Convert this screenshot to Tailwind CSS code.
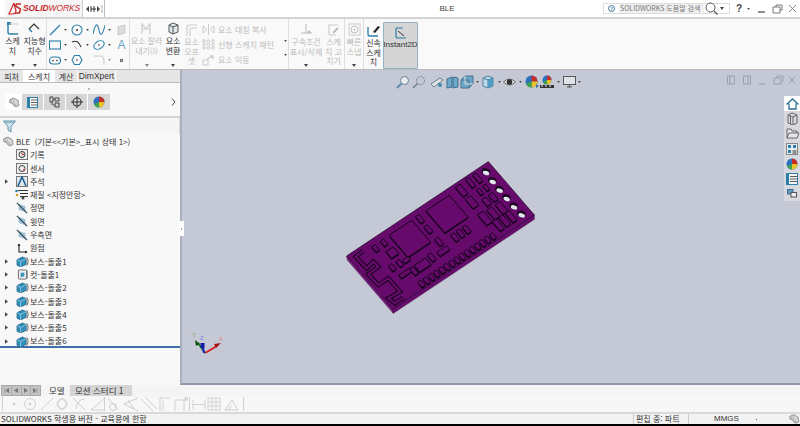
<!DOCTYPE html>
<html lang="ko">
<head>
<meta charset="utf-8">
<script src="https://cdn.jsdelivr.net/npm/@tailwindcss/browser@4"></script>
</head>
<body class="m-0 bg-black">
<svg width="0" height="0" class="absolute">
  <defs>
    <symbol id="caret" viewBox="0 0 4 3"><path d="M0 0h4L2 3z" fill="#444"/></symbol>
    <symbol id="caretl" viewBox="0 0 4 3"><path d="M0 0h4L2 3z" fill="#888"/></symbol>
    <symbol id="tri" viewBox="0 0 4 6"><path d="M0 0l4 3-4 3z" fill="#444"/></symbol>
    <symbol id="boss" viewBox="0 0 14 12">
      <path d="M1 4l6-3 4 2v6l-6 3-4-2z" fill="#2f8fb8" stroke="#1d5f80" stroke-width=".8"/>
      <path d="M1 4l4 2 6-3M5 6v6" fill="none" stroke="#b8e0f0" stroke-width=".7"/>
      <path d="M11.5 1.5c2 2 2 7 0 9" fill="none" stroke="#555" stroke-width="1"/>
    </symbol>
    <symbol id="cut" viewBox="0 0 14 12">
      <rect x="2.5" y="1" width="9" height="10" rx="1" fill="#e8eef2" stroke="#666" stroke-width="1"/>
      <path d="M5 4h4v4l-4 1z" fill="#3b93bb"/>
      <path d="M12 1.5v9" stroke="#666" stroke-width="1"/>
    </symbol>
    <symbol id="plane" viewBox="0 0 14 12">
      <path d="M3 1l8 3v7L3 8z" fill="#9cc0d4"/>
      <path d="M1 0l12 12" stroke="#2b3d4a" stroke-width="1.2"/>
    </symbol>
    <symbol id="part" viewBox="0 0 14 12">
      <path d="M2 3l4-2 3 1 3 2v3l1 2-3 2-3-1-2-3-3-1z" fill="#d8d8d8" stroke="#777" stroke-width=".9"/>
      <circle cx="5" cy="4.5" r="1.3" fill="#fff" stroke="#777" stroke-width=".6"/>
      <path d="M6 6l4 4" stroke="#777" stroke-width=".7"/>
    </symbol>
    <g id="comps">
      <rect x="27" y="3.6" width="16" height="16.5"/>
      <rect x="53" y="3.6" width="16.5" height="16.5"/>
      <rect x="14.7" y="3.5" width="2.5" height="4"/>
      <rect x="20.7" y="3.6" width="2.5" height="4"/>
      <rect x="19.3" y="10.4" width="5" height="5"/>
      <rect x="14.8" y="18" width="2.5" height="4"/>
      <rect x="19.7" y="18.4" width="2.5" height="4"/>
      <rect x="23.4" y="19.6" width="4" height="2.5"/>
      <rect x="16" y="25.6" width="7" height="2.5"/>
      <rect x="23.2" y="26" width="2.5" height="5"/>
      <rect x="26.6" y="25.9" width="8" height="5"/>
      <rect x="36.4" y="25.1" width="2.5" height="5"/>
      <rect x="41.8" y="26.8" width="7" height="3"/>
      <rect x="45.7" y="20" width="2.5" height="5"/>
      <rect x="46" y="3.1" width="2.5" height="5"/>
      <rect x="45.7" y="10.7" width="2.5" height="5"/>
      <rect x="54.6" y="23" width="2.5" height="5"/>
      <rect x="58.7" y="23" width="2.5" height="5"/>
      <rect x="62.8" y="23" width="2.5" height="5"/>
      <rect x="75.2" y="1.7" width="3.5" height="7"/>
      <rect x="82.7" y="1.4" width="2.5" height="6"/>
      <rect x="87.7" y="1.4" width="2.5" height="6"/>
      <rect x="75" y="10.6" width="4" height="7"/>
      <rect x="83.7" y="9.7" width="2" height="4"/>
      <rect x="88" y="9.7" width="2" height="4"/>
      <rect x="82.3" y="16" width="3" height="5"/>
      <rect x="87" y="16" width="3" height="5"/>
      <rect x="80.5" y="22.7" width="3.5" height="7"/>
      <rect x="86.3" y="22.7" width="3.5" height="7"/>
      <rect x="74.6" y="21.9" width="4" height="8"/>
      <rect x="78.5" y="29.9" width="3" height="7"/>
      <rect x="83" y="29.9" width="3" height="7"/>
      <rect x="87.5" y="29.9" width="3" height="7"/>
      <rect x="21.6" y="35" rx=".8" width="2.4" height="4"/>
      <rect x="25.2" y="35" rx=".8" width="2.4" height="4"/>
      <rect x="28.8" y="35" rx=".8" width="2.4" height="4"/>
      <rect x="32.4" y="35" rx=".8" width="2.4" height="4"/>
      <rect x="36" y="35" rx=".8" width="2.4" height="4"/>
      <rect x="39.6" y="35" rx=".8" width="2.4" height="4"/>
      <rect x="43.2" y="35" rx=".8" width="2.4" height="4"/>
      <rect x="46.8" y="35" rx=".8" width="2.4" height="4"/>
      <rect x="50.4" y="35" rx=".8" width="2.4" height="4"/>
      <rect x="54" y="35" rx=".8" width="2.4" height="4"/>
      <rect x="57.6" y="35" rx=".8" width="2.4" height="4"/>
      <rect x="61.2" y="35" rx=".8" width="2.4" height="4"/>
      <rect x="64.8" y="35" rx=".8" width="2.4" height="4"/>
      <rect x="68.4" y="35" rx=".8" width="2.4" height="4"/>
      <rect x="72" y="35" rx=".8" width="2.4" height="4"/>
    </g>
  </defs>
</svg>

<div class="w-[800px] h-[426px] overflow-hidden flex flex-col bg-black text-[#333] font-['Noto_Sans_CJK_KR','Noto_Sans',sans-serif]">

  <!-- title bar -->
  <header class="h-[19px] shrink-0 bg-white border-b-2 border-[#d4d4d4] flex items-stretch relative">
    <div class="ml-[5px] w-[78px] bg-[#f6f6f6] border-r border-[#ccc] flex items-center pl-[3px] gap-[1px]">
      <svg width="14" height="13" viewBox="0 0 14 13"><path d="M6 1L1 12h3.500q3 0 3.500-3L6 1" fill="none" stroke="#c8282c" stroke-width="1.200"/><path d="M13 2H8.500L7.500 4l5 3-1 4H7" fill="none" stroke="#c8282c" stroke-width="1.500"/></svg>
      <span class="text-[8.5px] font-bold italic text-[#c8282c] font-['Liberation_Sans',sans-serif] leading-none tracking-[-0.1px]">SOLID<span class="font-normal">WORKS</span></span>
    </div>
    <div class="w-[22px] border-r border-[#bbb] flex items-center pl-[3px] gap-[1px] text-[7px] text-[#333] leading-none">
      <svg width="14" height="8" viewBox="0 0 14 8"><path d="M3 1v6L0 4z" fill="#444"/><path d="M5 4h5M5 1v6M8 1v6" stroke="#333" fill="none"/><path d="M11 1v6l3-3z" fill="#444"/></svg>
      <span>¦</span>
    </div>
    <div class="flex-1 flex items-center justify-center text-[8px] text-[#444] pl-[186px] font-['Liberation_Sans',sans-serif]">BLE</div>
    <div class="w-[127px] my-[3px] bg-[#f0f0f0] border border-[#ddd] flex items-center">
      <div class="w-[15px] h-full bg-white flex items-center justify-center">
        <span class="w-[7px] h-[7px] rounded-full border border-[#3a7ca0] text-[5px] leading-[5px] text-center text-[#3a7ca0] font-bold">?</span>
      </div>
      <span class="text-[7px] text-[#777] pl-[1px] whitespace-nowrap flex-1">SOLIDWORKS 도움말 검색</span>
      <div class="w-[25px] h-full bg-white flex items-center gap-[2px] pl-[1px]">
        <svg width="13" height="13" viewBox="0 0 13 13"><circle cx="5.5" cy="5.5" r="4.5" fill="none" stroke="#555"/><path d="M9 9l3.500 3.500" stroke="#555" stroke-width="1.200"/></svg>
        <svg class="w-[4px] h-[3px]"><use href="#caret"/></svg>
      </div>
    </div>
    <div class="w-[70px] flex items-center pl-[6px] text-[#444]">
      <span class="text-[10px] font-bold leading-none font-['Liberation_Sans',sans-serif] w-[11px]">?</span>
      <svg class="w-[3px] h-[2px] mr-[8px]"><use href="#caret"/></svg>
      <svg width="40" height="10" viewBox="0 0 40 10"><path d="M0 8h7" stroke="#444" stroke-width="1.200"/><path d="M15 3h7v6h-7zM18 3V1h6v5h-2" fill="none" stroke="#777"/><path d="M31 1l7 7M38 1l-7 7" stroke="#888"/></svg>
    </div>
  </header>

  <!-- ribbon -->
  <section class="h-[51px] shrink-0 bg-[#f9f9f9] border-b border-[#bbb] flex text-[8px] leading-[10px] text-center">
    <div class="w-[23px] ml-[1px] flex flex-col items-center pt-[3px] pb-[2px]">
      <svg width="13" height="13" viewBox="0 0 13 13"><path d="M2 1v9q0 2 2 2h8" fill="none" stroke="#2c7fa8" stroke-width="1.400"/><rect x="1" y="0" width="4" height="3" fill="#2c7fa8"/><path d="M3 2h9" stroke="#ccc"/></svg>
      <span class="mt-[1px]">스케<br>치</span>
      <svg class="w-[4px] h-[3px] mt-auto"><use href="#caret"/></svg>
    </div>
    <div class="w-[21px] flex flex-col items-center pt-[3px] pb-[2px] border-r border-[#ddd] pr-[1px] box-content">
      <svg width="13" height="13" viewBox="0 0 13 13"><path d="M1 7l5-5 5 5" fill="none" stroke="#333" stroke-width="1.200"/><path d="M1 7l3 3" stroke="#2c7fa8" stroke-width="1.400"/></svg>
      <span class="mt-[1px] whitespace-nowrap">지능형<br>치수</span>
      <svg class="w-[4px] h-[3px] mt-auto"><use href="#caret"/></svg>
    </div>

    <!-- sketch tools -->
    <div class="w-[83px] border-r border-[#ddd] grid grid-cols-[22px_22px_22px_15px] grid-rows-3 pl-[1px] pt-[3px] pb-[1px]">
      <div class="flex items-center pl-[1px] gap-[3px]"><svg width="12" height="12" viewBox="0 0 12 12"><path d="M1 11L11 1" stroke="#2c7fa8" stroke-width="1.200"/></svg><svg class="w-[3px] h-[2px]"><use href="#caret"/></svg></div>
      <div class="flex items-center pl-[1px] gap-[3px]"><svg width="12" height="12" viewBox="0 0 12 12"><circle cx="6" cy="6" r="5" fill="none" stroke="#2c7fa8" stroke-width="1.100"/><circle cx="6" cy="6" r="1" fill="#333"/></svg><svg class="w-[3px] h-[2px]"><use href="#caret"/></svg></div>
      <div class="flex items-center pl-[1px] gap-[3px]"><svg width="12" height="12" viewBox="0 0 12 12"><path d="M0 10C3 -4 5 1 6 6s3 8 6-5" fill="none" stroke="#2c7fa8" stroke-width="1.100"/></svg><svg class="w-[3px] h-[2px]"><use href="#caret"/></svg></div>
      <div class="flex items-center justify-center"><svg width="9" height="12" viewBox="0 0 9 12"><path d="M1 3l7-2v8l-7 2z" fill="#ddd" stroke="#aaa" stroke-dasharray="1 1"/></svg></div>
      <div class="flex items-center pl-[1px] gap-[3px]"><svg width="12" height="10" viewBox="0 0 12 10"><rect x=".5" y="1" width="11" height="8" fill="none" stroke="#2c7fa8" stroke-width="1.100"/></svg><svg class="w-[3px] h-[2px]"><use href="#caret"/></svg></div>
      <div class="flex items-center pl-[1px] gap-[3px]"><svg width="12" height="12" viewBox="0 0 12 12"><path d="M1 3q6-3 9 5" fill="none" stroke="#333" stroke-width="1.100"/><path d="M3 7l3 3" stroke="#aaa"/></svg><svg class="w-[3px] h-[2px]"><use href="#caret"/></svg></div>
      <div class="flex items-center pl-[1px] gap-[3px]"><svg width="12" height="12" viewBox="0 0 12 12"><ellipse cx="6" cy="6" rx="5.500" ry="3.700" transform="rotate(-30 6 6)" fill="none" stroke="#2c7fa8" stroke-width="1.100"/><circle cx="6" cy="6" r=".8" fill="#333"/></svg><svg class="w-[3px] h-[2px]"><use href="#caret"/></svg></div>
      <div class="flex items-center justify-center text-[12px] font-['Liberation_Sans',sans-serif] text-[#6aa6c4] leading-none">A</div>
      <div class="flex items-center pl-[1px] gap-[3px]"><svg width="12" height="9" viewBox="0 0 12 9"><rect x=".5" y="1" width="11" height="7" rx="3.500" fill="none" stroke="#2c7fa8" stroke-width="1.100"/><circle cx="4" cy="4.500" r=".8" fill="#333"/><circle cx="8" cy="4.500" r=".8" fill="#333"/></svg><svg class="w-[3px] h-[2px]"><use href="#caret"/></svg></div>
      <div class="flex items-center pl-[1px]"><svg width="12" height="12" viewBox="0 0 12 12"><path d="M3.500 1.500h5L11 6 8.500 10.500h-5L1 6z" fill="none" stroke="#2c7fa8" stroke-width="1.100"/><circle cx="6" cy="6" r=".8" fill="#333"/></svg></div>
      <div class="flex items-center pl-[1px] gap-[3px]"><svg width="12" height="12" viewBox="0 0 12 12"><path d="M1 2h6q4 0 4 5v4" fill="none" stroke="#ccc" stroke-width="1.100"/></svg><svg class="w-[3px] h-[2px]"><use href="#caretl"/></svg></div>
      <div class="flex items-center justify-center"><span class="w-[3px] h-[3px] border border-[#666]"></span></div>
    </div>

    <!-- disabled entity tools -->
    <div class="w-[33px] flex flex-col items-center pt-[3px] pb-[2px] text-[#bbb]">
      <svg width="13" height="13" viewBox="0 0 13 13"><path d="M2 12V2l4 5 4-5v10M2 7h8" fill="none" stroke="#ccc" stroke-width="1.200"/></svg>
      <span class="mt-[1px] whitespace-nowrap">요소 잘라<br>내기(I)</span>
      <svg class="w-[4px] h-[3px] mt-auto"><use href="#caretl"/></svg>
    </div>
    <div class="w-[20px] flex flex-col items-center pt-[3px] pb-[2px]">
      <svg width="13" height="13" viewBox="0 0 13 13"><path d="M2 3l4-2 5 2v7l-5 2-4-2z" fill="#dfe8ee" stroke="#555"/><path d="M2 3l4 2 5-2M6 5v7" fill="none" stroke="#555"/></svg>
      <span class="mt-[1px]">요소<br>변환</span>
      <svg class="w-[4px] h-[3px] mt-auto"><use href="#caret"/></svg>
    </div>
    <div class="w-[17px] flex flex-col items-center pt-[5px] text-[#bbb] leading-[9.5px]">
      <svg width="12" height="12" viewBox="0 0 12 12"><path d="M1 12V3q0-2 2-2h8M4 12V6q0-2 2-2h5" fill="none" stroke="#ccc" stroke-width="1.100"/></svg>
      <span class="mt-[1px]">요소<br>오프<br>셋</span>
    </div>
    <div class="w-[83px] grid grid-rows-3 pt-[3px] pb-[1px] pl-[2px] text-[#bbb] text-left whitespace-nowrap">
      <div class="flex items-center gap-[3px]"><svg width="13" height="11" viewBox="0 0 13 11"><path d="M6.500 0v11M1 2l4 3.500-4 3.500zM12 2L8 5.500l4 3.500z" fill="none" stroke="#ccc"/></svg>요소 대칭 복사</div>
      <div class="flex items-center gap-[3px]"><svg width="13" height="11" viewBox="0 0 13 11"><g fill="none" stroke="#ccc"><circle cx="2" cy="2" r="1.300"/><circle cx="6.500" cy="2" r="1.300"/><circle cx="11" cy="2" r="1.300"/><circle cx="2" cy="5.500" r="1.300"/><circle cx="6.500" cy="5.500" r="1.300"/><circle cx="11" cy="5.500" r="1.300"/><circle cx="2" cy="9" r="1.300"/><circle cx="6.500" cy="9" r="1.300"/><circle cx="11" cy="9" r="1.300"/></g></svg>선형 스케치 패턴</div>
      <div class="flex items-center gap-[3px]"><svg width="13" height="11" viewBox="0 0 13 11"><rect x="1" y="5" width="5" height="5" fill="none" stroke="#ccc"/><path d="M5 4l6-3M8 1h3v3" fill="none" stroke="#bbb"/></svg>요소 이동</div>
    </div>
    <div class="w-[6px] flex flex-col items-center justify-center gap-[12px] border-r border-[#ddd] pt-[8px]">
      <svg class="w-[3px] h-[2px]"><use href="#caret"/></svg>
      <svg class="w-[3px] h-[2px]"><use href="#caret"/></svg>
    </div>
    <div class="w-[34px] flex flex-col items-center pt-[4px] pb-[2px] text-[#bbb]">
      <svg width="13" height="13" viewBox="0 0 13 13"><path d="M6 1v9M1 10h11" fill="none" stroke="#bbb"/><circle cx="9" cy="9" r="1.500" fill="#bbb"/></svg>
      <span class="mt-[1px] whitespace-nowrap">구속조건<br>표시/삭제</span>
      <svg class="w-[4px] h-[3px] mt-auto"><use href="#caret"/></svg>
    </div>
    <div class="w-[21px] flex flex-col items-center pt-[5px] text-[#bbb] border-r border-[#ddd] box-content leading-[9.5px]">
      <svg width="13" height="12" viewBox="0 0 13 12"><path d="M11 1H2v8q0 2 2 2h5" fill="none" stroke="#ccc" stroke-width="1.200"/><path d="M6 9l5-5" stroke="#bbb" stroke-width="1.800"/></svg>
      <span class="mt-[1px] whitespace-nowrap">스케<br>치 고<br>치기</span>
    </div>
    <div class="w-[18px] flex flex-col items-center pt-[4px] pb-[2px] text-[#bbb] border-r border-[#ddd] box-content">
      <svg width="13" height="13" viewBox="0 0 13 13"><rect x="1" y="1" width="11" height="11" fill="none" stroke="#ccc"/><circle cx="6.500" cy="6.500" r="3.500" fill="none" stroke="#bbb"/><circle cx="6.500" cy="6.500" r="1" fill="#bbb"/></svg>
      <span class="mt-[1px]">빠른<br>스냅</span>
      <svg class="w-[4px] h-[3px] mt-auto"><use href="#caret"/></svg>
    </div>
    <div class="w-[19px] flex flex-col items-center pt-[6px] leading-[9.5px]">
      <svg width="13" height="12" viewBox="0 0 13 12"><path d="M1 2v7q0 2 2 2h8" fill="none" stroke="#2c7fa8" stroke-width="1.300"/><path d="M6 7l5-6 2 1-5 6z" fill="#222"/></svg>
      <span class="mt-[1px]">신속<br>스케<br>치</span>
    </div>
    <div class="w-[35px] bg-[#d5d5d5] border border-[#8fb4c8] rounded-[1px] mt-[3px] flex flex-col items-center pt-[4px] text-[8px] font-['Liberation_Sans',sans-serif] whitespace-nowrap">
      <svg width="13" height="12" viewBox="0 0 13 12"><path d="M2 1h7M2 1v8q0 2 2 2h8" fill="none" stroke="#2c7fa8" stroke-width="1.200"/><path d="M4 4l6 5" stroke="#333"/></svg>
      <span class="mt-[1px]">Instant2D</span>
    </div>
  </section>

  <!-- main -->
  <main class="flex-1 min-h-0 flex">
    <!-- left panel -->
    <aside class="w-[180px] shrink-0 bg-[#f8f8f8] flex flex-col relative">
      <div class="h-[13px] shrink-0 bg-[#e6e6e6] border-b border-[#bbb] flex text-[8px] leading-[13px] text-[#333]">
        <span class="w-[24px] text-center border-r border-white">피처</span>
        <span class="w-[30px] text-center bg-white">스케치</span>
        <span class="w-[24px] text-center border-r border-l border-white">계산</span>
        <span class="w-[38px] text-center border-r border-white font-['Liberation_Sans',sans-serif] text-[8.5px]">DimXpert</span>
      </div>
      <div class="h-[11px] shrink-0 flex items-center justify-center pr-[2px]"><span class="w-[2px] h-[2px] rounded-full bg-[#aaa]"></span></div>
      <div class="h-[16px] shrink-0 flex items-stretch pl-[5px] pr-[4px]">
        <div class="w-[17px] flex items-center justify-center bg-white"><svg class="w-[12px] h-[11px]"><use href="#part"/></svg></div>
        <div class="w-[22px] flex items-center justify-center bg-[#d6d6d6] border-r border-white"><svg width="11" height="11" viewBox="0 0 11 11"><rect x=".5" y=".5" width="10" height="10" fill="#fff" stroke="#2c7fa8"/><path d="M1 1h2v9H1z" fill="#2c7fa8"/><path d="M4 3h6M4 5.500h6M4 8h6" stroke="#333" stroke-width=".8"/></svg></div>
        <div class="w-[22px] flex items-center justify-center bg-[#d6d6d6] border-r border-white"><svg width="11" height="12" viewBox="0 0 11 12"><path d="M1 1h3v5H1zM6 2h4v3H6zM6 7h4v4H6zM4 3h2M4 9h2M3 6v3" fill="none" stroke="#444"/></svg></div>
        <div class="w-[22px] flex items-center justify-center bg-[#d6d6d6] border-r border-white"><svg width="12" height="12" viewBox="0 0 12 12"><circle cx="6" cy="6" r="4" fill="none" stroke="#333" stroke-width="1.100"/><path d="M6 0v12M0 6h12" stroke="#333"/></svg></div>
        <div class="w-[22px] flex items-center justify-center bg-[#d6d6d6]"><svg width="12" height="12" viewBox="0 0 12 12"><circle cx="6" cy="6" r="5.500" fill="#2f6fc0"/><path d="M6 6V.5A5.500 5.500 0 0 1 11.500 6z" fill="#c42e26"/><path d="M6 6h5.500A5.500 5.500 0 0 1 6 11.500z" fill="#e8c228"/><path d="M6 6v5.500A5.500 5.500 0 0 1 1 8z" fill="#3fa34a"/></svg></div>
        <div class="flex-1 flex items-center justify-end"><svg width="5" height="8" viewBox="0 0 5 8"><path d="M1 .5L4 4 1 7.500" fill="none" stroke="#444"/></svg></div>
      </div>
      <div class="h-[8px] shrink-0 border-b-2 border-[#d4d4d4]"></div>
      <div class="h-[16px] shrink-0 bg-[#f5f5f5] border-r border-[#ddd] flex items-center pl-[3px]">
        <svg width="13" height="13" viewBox="0 0 13 13"><path d="M.5 1h12L8 6.500V12L5 10V6.500z" fill="#cfe3ee" stroke="#5b8fa8"/><path d="M2 2.500h9" stroke="#8ab0c2"/></svg>
      </div>
      <ul class="flex flex-col text-[8px] leading-[13.3px] h-[214px] border-b-2 border-[#3f6fa8] pt-[1px] whitespace-nowrap shrink-0">
        <li class="h-[13.3px] flex items-center pl-[2px] gap-[2px]"><svg class="w-[12px] h-[11px]"><use href="#part"/></svg>BLE&nbsp; (기본&lt;&lt;기본&gt;_표시 상태 1&gt;)</li>
        <li class="h-[13.3px] flex items-center pl-[16px] gap-[2px]"><svg width="12" height="11" viewBox="0 0 12 11"><rect x=".5" y=".5" width="11" height="10" fill="#eee" stroke="#777"/><circle cx="6" cy="5.500" r="3" fill="none" stroke="#333"/><path d="M6 3.500v2h2" stroke="#c33" fill="none"/></svg>기록</li>
        <li class="h-[13.3px] flex items-center pl-[16px] gap-[2px]"><svg width="12" height="11" viewBox="0 0 12 11"><rect x=".5" y=".5" width="11" height="10" fill="#eee" stroke="#777"/><circle cx="6" cy="5.500" r="3" fill="none" stroke="#444"/><circle cx="8" cy="7" r="1" fill="#c33"/></svg>센서</li>
        <li class="h-[13.3px] flex items-center pl-[5px] gap-[2px]"><svg class="w-[3px] h-[5px] mr-[6px]"><use href="#tri"/></svg><svg width="12" height="11" viewBox="0 0 12 11"><rect x=".5" y=".5" width="11" height="10" fill="#dfe8ee" stroke="#777"/><path d="M2 10L6 1l4 9" fill="none" stroke="#1f5f90" stroke-width="1.600"/></svg>주석</li>
        <li class="h-[13.3px] flex items-center pl-[15px] gap-[2px]"><svg width="13" height="11" viewBox="0 0 13 11"><path d="M3 1.500h10M5 4.500h8M5 7.500h8" stroke="#333"/><circle cx="1.500" cy="2" r="1.300" fill="#2c7fa8"/><circle cx="2" cy="6" r="1.300" fill="#d8a020"/><circle cx="8" cy="9" r="1.500" fill="#444"/></svg>재질 &lt;지정안함&gt;</li>
        <li class="h-[13.3px] flex items-center pl-[16px] gap-[2px]"><svg class="w-[12px] h-[12px]"><use href="#plane"/></svg>정면</li>
        <li class="h-[13.3px] flex items-center pl-[16px] gap-[2px]"><svg class="w-[12px] h-[12px]"><use href="#plane"/></svg>윗면</li>
        <li class="h-[13.3px] flex items-center pl-[16px] gap-[2px]"><svg class="w-[12px] h-[12px]"><use href="#plane"/></svg>우측면</li>
        <li class="h-[13.3px] flex items-center pl-[16px] gap-[2px]"><svg width="12" height="11" viewBox="0 0 12 11"><path d="M3 1v8h8" fill="none" stroke="#222" stroke-width="1.100"/><path d="M1.500 3L3 .5 4.500 3zM9 7.500L11.500 9 9 10.500z" fill="#222"/></svg>원점</li>
        <li class="h-[13.3px] flex items-center pl-[5px] gap-[2px]"><svg class="w-[3px] h-[5px] mr-[6px]"><use href="#tri"/></svg><svg class="w-[13px] h-[11px] mr-[-1px]"><use href="#boss"/></svg>보스-돌출1</li>
        <li class="h-[13.3px] flex items-center pl-[5px] gap-[2px]"><svg class="w-[3px] h-[5px] mr-[6px]"><use href="#tri"/></svg><svg class="w-[13px] h-[11px] mr-[-1px]"><use href="#cut"/></svg>컷-돌출1</li>
        <li class="h-[13.3px] flex items-center pl-[5px] gap-[2px]"><svg class="w-[3px] h-[5px] mr-[6px]"><use href="#tri"/></svg><svg class="w-[13px] h-[11px] mr-[-1px]"><use href="#boss"/></svg>보스-돌출2</li>
        <li class="h-[13.3px] flex items-center pl-[5px] gap-[2px]"><svg class="w-[3px] h-[5px] mr-[6px]"><use href="#tri"/></svg><svg class="w-[13px] h-[11px] mr-[-1px]"><use href="#boss"/></svg>보스-돌출3</li>
        <li class="h-[13.3px] flex items-center pl-[5px] gap-[2px]"><svg class="w-[3px] h-[5px] mr-[6px]"><use href="#tri"/></svg><svg class="w-[13px] h-[11px] mr-[-1px]"><use href="#boss"/></svg>보스-돌출4</li>
        <li class="h-[13.3px] flex items-center pl-[5px] gap-[2px]"><svg class="w-[3px] h-[5px] mr-[6px]"><use href="#tri"/></svg><svg class="w-[13px] h-[11px] mr-[-1px]"><use href="#boss"/></svg>보스-돌출5</li>
        <li class="h-[13.3px] flex items-center pl-[5px] gap-[2px]"><svg class="w-[3px] h-[5px] mr-[6px]"><use href="#tri"/></svg><svg class="w-[13px] h-[11px] mr-[-1px]"><use href="#boss"/></svg>보스-돌출6</li>
      </ul>
      <div class="absolute right-[-4px] top-[151px] w-[5px] h-[15px] bg-white flex items-center justify-center z-10"><span class="w-[1px] h-[2px] bg-[#999]"></span></div>
    </aside>

    <!-- viewport -->
    <div class="flex-1 relative bg-[#c5c9d5] border-l-2 border-[#aab0bd] border-b-2 border-b-[#8f96a5]">
      <div class="h-[23px] flex items-center pl-[214px]">
        <svg class="shrink-0" width="14" height="14" viewBox="0 0 14 14"><circle cx="8.500" cy="5.500" r="4" fill="#e8ebf0" stroke="#6a7f8f"/><path d="M5.500 8.500L1 13" stroke="#5f8db0" stroke-width="2"/></svg>
        <svg class="shrink-0 ml-[2px]" width="14" height="14" viewBox="0 0 14 14"><circle cx="8.500" cy="5.500" r="4" fill="none" stroke="#6a7f8f" stroke-dasharray="2 1"/><path d="M5.500 8.500L1 13" stroke="#6a7f8f" stroke-width="1.500"/></svg>
        <svg class="shrink-0 ml-[4px]" width="14" height="14" viewBox="0 0 14 14"><path d="M1 9l9-6 3 2-9 7z" fill="#dfe3e8" stroke="#6a7f8f"/><circle cx="10" cy="10" r="2" fill="#3b8ab0"/></svg>
        <svg class="shrink-0 ml-[1.5px]" width="13" height="14" viewBox="0 0 13 14"><path d="M1 4l5-2v10l-5 1zM7 2l5 1v9l-5 1z" fill="#6aa8cc" stroke="#3f6f8c"/></svg>
        <svg class="shrink-0 ml-[1.5px]" width="14" height="14" viewBox="0 0 14 14"><path d="M1 5h8v8H1zM1 5l4-4h8v8l-4 4" fill="#6aa8cc" stroke="#4f6f8c"/><path d="M5 1v8H13" stroke="#ddd" fill="none"/></svg>
        <svg class="shrink-0 w-[3px] h-[2px] ml-[1.5px]"><use href="#caret"/></svg>
        <svg class="shrink-0 ml-[3.5px]" width="12" height="14" viewBox="0 0 12 14"><path d="M1 3l5-2 5 2v8l-5 2-5-2z" fill="#bcdcec" stroke="#4f7f9c"/><path d="M6 4v9M1 3l5 2 5-2" fill="none" stroke="#4f7f9c"/><path d="M6 5l5-2v8l-5 2z" fill="#4f9cc4"/></svg>
        <svg class="shrink-0 w-[3px] h-[2px] ml-[3.5px]"><use href="#caret"/></svg>
        <svg class="shrink-0 ml-[2px]" width="13" height="12" viewBox="0 0 13 12"><path d="M.5 6Q6.500 0 12.500 6 6.500 12 .5 6z" fill="#eee" stroke="#666"/><circle cx="6.500" cy="6" r="2.800" fill="#333"/></svg>
        <svg class="shrink-0 w-[3px] h-[2px] ml-[3px]"><use href="#caret"/></svg>
        <svg class="shrink-0 ml-[3.5px]" width="14" height="14" viewBox="0 0 14 14"><circle cx="6.500" cy="6.500" r="6" fill="#2f6fc0"/><path d="M6.500 6.500V.5A6 6 0 0 1 12.500 6.500z" fill="#c42e26"/><path d="M6.500 6.500h6A6 6 0 0 1 6.500 12.500z" fill="#e8c228"/><path d="M6.500 6.500v6A6 6 0 0 1 1 9z" fill="#3fa34a"/><path d="M11 9l3 2-3 2z" fill="#3b6fa0"/></svg>
        <svg class="shrink-0 ml-[1px]" width="14" height="14" viewBox="0 0 14 14"><circle cx="7" cy="5" r="4.500" fill="#2f6fc0"/><path d="M7 5V.5A4.500 4.500 0 0 1 11.500 5z" fill="#c42e26"/><path d="M7 5h4.500A4.500 4.500 0 0 1 7 9.500z" fill="#e8c228"/><path d="M7 5v4.500A4.500 4.500 0 0 1 3 7z" fill="#3fa34a"/><path d="M0 10h14v3H0z" fill="#333"/><path d="M1 11h2M5 11h2M9 11h2" stroke="#eee"/></svg>
        <svg class="shrink-0 w-[3px] h-[2px] ml-[2.5px]"><use href="#caret"/></svg>
        <svg class="shrink-0 ml-[3px]" width="13" height="12" viewBox="0 0 13 12"><rect x=".5" y=".5" width="12" height="8" fill="#dfe3e8" stroke="#555"/><path d="M4 11h5M6.500 9v2" stroke="#555" stroke-width="1.200"/></svg>
        <svg class="shrink-0 w-[3px] h-[2px] ml-[2px]"><use href="#caret"/></svg>
      </div>
      <!-- window controls of the document -->
      <div class="absolute top-[5px] right-[5px] flex items-center">
        <svg width="68" height="11" viewBox="0 0 68 11"><g fill="none" stroke="#9aa0ac"><path d="M.5 1h7v8h-7zM3 1v8"/><path d="M16.500 1h7v8h-7zM21 1v8"/><path d="M32 9h6" stroke-width="1.200"/><path d="M47 3h7v6h-7zM50 3V1h6v5h-2"/><path d="M62 1.500l6 7M68 1.500l-6 7"/></g></svg>
      </div>

      <!-- the part -->
      <svg class="absolute left-[158px] top-[80px]" width="200" height="170" viewBox="0 0 600 510">
        <path d="M20 318L158 478 160 490 22 330z" fill="#7d1a85" stroke="#3a0a3e" stroke-width="1.500"/>
        <path d="M158 478L583 195 583 208 160 490z" fill="#690c70" stroke="#3a0a3e" stroke-width="1.500"/>
        <path d="M20 318L445 35 583 195 158 478z" fill="#660a6c" stroke="#2e0832" stroke-width="2.500"/>
        <path d="M70 303L47 320 80 355 100 335 115 350 85 373 115 405 145 385 180 425 145 445 165 460 190 443" fill="none" stroke="#14031a" stroke-width="13" stroke-linejoin="miter"/>
        <path d="M70 303L47 320 80 355 100 335 115 350 85 373 115 405 145 385 180 425 145 445 165 460 190 443" fill="none" stroke="#660a6c" stroke-width="7" stroke-linejoin="miter"/>
        <g transform="translate(0 4)"><use href="#comps" transform="matrix(4.250 -2.830 3.450 4 20 318)" fill="#14031a"/></g>
        <use href="#comps" transform="matrix(4.250 -2.830 3.450 4 20 318)" fill="#660a6c" stroke="#14031a" stroke-width=".5"/>
        <g fill="#1c0520">
          <ellipse cx="437" cy="65" rx="13" ry="10" transform="rotate(20 437 65)"/>
          <ellipse cx="457" cy="92" rx="13" ry="10" transform="rotate(20 457 92)"/>
          <ellipse cx="478" cy="118" rx="13" ry="10" transform="rotate(20 478 118)"/>
          <ellipse cx="499" cy="143" rx="13" ry="10" transform="rotate(20 499 143)"/>
          <ellipse cx="521" cy="168" rx="13" ry="10" transform="rotate(20 521 168)"/>
          <ellipse cx="544" cy="192" rx="13" ry="10" transform="rotate(20 544 192)"/>
        </g>
        <g fill="#e4e6ee">
          <ellipse cx="438" cy="69" rx="10" ry="6" transform="rotate(20 438 69)"/>
          <ellipse cx="458" cy="96" rx="10" ry="6" transform="rotate(20 458 96)"/>
          <ellipse cx="479" cy="122" rx="10" ry="6" transform="rotate(20 479 122)"/>
          <ellipse cx="500" cy="147" rx="10" ry="6" transform="rotate(20 500 147)"/>
          <ellipse cx="522" cy="172" rx="10" ry="6" transform="rotate(20 522 172)"/>
          <ellipse cx="545" cy="196" rx="10" ry="6" transform="rotate(20 545 196)"/>
        </g>
      </svg>

      <!-- triad -->
      <svg class="absolute left-[6px] top-[256px]" width="36" height="32" viewBox="0 0 36 32" font-family="Liberation Sans" font-size="6">
        <path d="M17 27L29 20" stroke="#d81e1e" stroke-width="2"/><path d="M33 17l-7 1 2 4z" fill="#a81414"/>
        <path d="M17 27L10 17" stroke="#1d7a1d" stroke-width="1.800"/><path d="M7 14l1 6 4-2z" fill="#0f4f0f"/>
        <path d="M16 27l-1-6" stroke="#2020c0" stroke-width="2"/><rect x="12.500" y="17" width="4" height="5" fill="#1a1aa8"/>
        <text x="31" y="15" fill="#e58080">X</text><text x="4" y="11" fill="#70a870">Y</text><text x="12" y="14" fill="#8080e0">Z</text>
      </svg>

      <!-- task pane -->
      <div class="absolute right-0 top-[26px] w-[16px] h-[105px] bg-[#d7d9df] flex flex-col">
        <div class="h-[15px] bg-white flex items-center justify-center"><svg width="13" height="12" viewBox="0 0 13 12"><path d="M.5 6.500L6.500 1l6 5.500M3 5.500V11h7V5.500" fill="#fff" stroke="#2c6f94" stroke-width="1.300"/></svg></div>
        <div class="h-[15px] flex items-center justify-center"><svg width="11" height="13" viewBox="0 0 11 13"><path d="M1 3l4-2 5 2v8l-4 2-5-2z" fill="#d7d9df" stroke="#666"/><path d="M1 3l5 2 4-2M6 5v8M3.500 4v8" fill="none" stroke="#666"/></svg></div>
        <div class="h-[15px] flex items-center justify-center"><svg width="13" height="11" viewBox="0 0 13 11"><path d="M1 10V1h4l1 2h5v2M1 10l2-5h10l-2 5z" fill="#e4e6ea" stroke="#666"/></svg></div>
        <div class="h-[15px] flex items-center justify-center"><svg width="12" height="12" viewBox="0 0 12 12"><rect x=".5" y=".5" width="11" height="11" fill="#e8eaee" stroke="#888"/><rect x="2" y="2" width="3" height="3" fill="#2c7fa8"/><rect x="7" y="2" width="3" height="3" fill="#2c7fa8"/><rect x="2" y="7" width="3" height="3" fill="#2c7fa8"/><path d="M6.500 8h4M6.500 10h4" stroke="#333"/></svg></div>
        <div class="h-[15px] flex items-center justify-center"><svg width="12" height="12" viewBox="0 0 12 12"><circle cx="6" cy="6" r="5.500" fill="#2f6fc0"/><path d="M6 6V.5A5.500 5.500 0 0 1 11.500 6z" fill="#c42e26"/><path d="M6 6h5.500A5.500 5.500 0 0 1 6 11.500z" fill="#e8c228"/><path d="M6 6v5.500A5.500 5.500 0 0 1 1 8z" fill="#3fa34a"/></svg></div>
        <div class="h-[15px] flex items-center justify-center"><svg width="12" height="12" viewBox="0 0 12 12"><rect x=".5" y=".5" width="11" height="11" fill="#f4f4f4" stroke="#2c7fa8"/><path d="M1 1h2v10H1z" fill="#2c7fa8"/><path d="M4 3.500h7M4 6h7M4 8.500h7" stroke="#333" stroke-width=".8"/></svg></div>
        <div class="h-[15px] flex items-center justify-center"><svg width="10" height="9" viewBox="0 0 10 9"><rect x=".5" y=".5" width="5.500" height="4.500" fill="#5b9bc0" stroke="#3f6f8c"/><rect x="4" y="3.500" width="5.500" height="4.500" fill="#eee" stroke="#555"/></svg></div>
      </div>
    </div>
  </main>

  <!-- bottom tabs -->
  <div class="h-[11px] shrink-0 bg-[#f4f4f4] flex items-stretch text-[8.5px] leading-[11px]">
    <div class="ml-[1px] w-[40px] bg-[#a9a9a9] grid grid-cols-4 gap-[1px] p-[1px]">
      <span class="bg-[#c2c2c2] flex items-center justify-center"><svg width="5" height="5" viewBox="0 0 5 5"><path d="M1 0v5M5 0v5L2 2.500z" fill="#777" stroke="#777" stroke-width=".5"/></svg></span>
      <span class="bg-[#c2c2c2] flex items-center justify-center"><svg width="4" height="5" viewBox="0 0 4 5"><path d="M4 0v5L0 2.500z" fill="#777"/></svg></span>
      <span class="bg-[#c2c2c2] flex items-center justify-center"><svg width="4" height="5" viewBox="0 0 4 5"><path d="M0 0v5l4-2.500z" fill="#777"/></svg></span>
      <span class="bg-[#c2c2c2] flex items-center justify-center"><svg width="5" height="5" viewBox="0 0 5 5"><path d="M4 0v5M0 0v5l3-2.500z" fill="#777" stroke="#777" stroke-width=".5"/></svg></span>
    </div>
    <span class="ml-[8px] w-[21px]">모델</span>
    <span class="w-[62px] bg-[#d4d4d4] pl-[5px] whitespace-nowrap">모션 스터디 1</span>
  </div>

  <!-- sketch toolbar -->
  <div class="h-[18px] shrink-0 bg-[#f7f7f7] border-b-2 border-[#d9d9d9] flex items-center">
    <svg width="250" height="16" viewBox="0 0 250 16" fill="none" stroke="#d0d0d0">
      <path d="M2.500 1v14M104.500 1v14M189.500 1v14M243.500 1v14" stroke="#d0d0d0"/>
      <circle cx="14" cy="8" r="1" fill="#c8c8c8"/>
      <circle cx="30" cy="8" r="5.500"/><circle cx="30" cy="8" r="1" fill="#c8c8c8"/>
      <path d="M41 14L53 2"/>
      <circle cx="62" cy="8" r="5"/><path d="M57 8l5-6 5 6-5 6z"/>
      <path d="M73 2l12 12M85 3q-8 0-9 10"/>
      <path d="M91 14L104 3M91 14h13"/>
      <circle cx="113" cy="11" r="3.500"/><path d="M108 2l10 12"/>
      <path d="M124 8l14-6M124 8l14 7M128 4l6 9"/>
      <path d="M141 3l12 12M145 1l12 12"/>
      <path d="M160 15V2h10M163 15V5"/>
      <path d="M175 15V4h9v11M184 3h4"/><circle cx="186" cy="3" r="1.500"/>
      <path d="M193 4v9M205 4v9M193 8.500h12"/>
      <path d="M208 2h12v12h-12zM212 2v12M216 2v12M208 6h12M208 10h12" stroke="#d4d4d4"/>
      <path d="M225 14h13L232 4zM229 14q0-3 3-4"/>
    </svg>
  </div>

  <!-- status bar -->
  <footer class="h-[10px] shrink-0 bg-[#f2f2f2] flex items-center text-[8px] leading-none text-[#333] whitespace-nowrap mb-[2px]">
    <span class="w-[633px] pl-[1px]">SOLIDWORKS 학생용 버전 - 교육용에 한함</span>
    <span class="w-[46px] h-full flex items-center pl-[2px] border-x border-[#ccc]">편집 중: 파트</span>
    <span class="w-[9px]"></span>
    <span class="h-full border-l border-[#ccc] w-[68px] pl-[25px] flex items-center font-['Liberation_Sans',sans-serif]">MMGS</span>
    <span class="w-[1px] h-[1px] bg-[#555] mr-[31px]"></span>
    <svg class="w-[12px] h-[10px]"><use href="#part"/></svg>
  </footer>
</div>
</body>
</html>
